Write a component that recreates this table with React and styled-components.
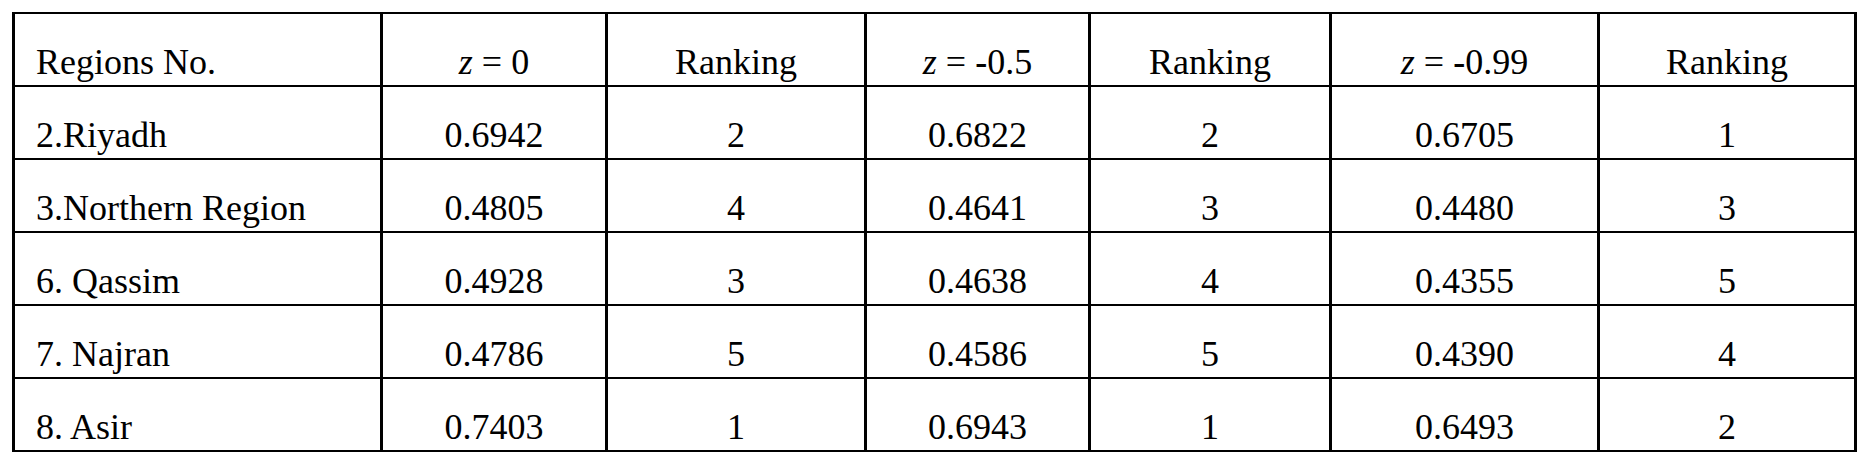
import React from 'react';
import styled, { createGlobalStyle } from 'styled-components';

// --- Styled Components (CSS) ---
const GlobalStyle = createGlobalStyle`
  html, body {
    margin: 0;
    padding: 0;
    background: #ffffff;
  }
`;

const Page = styled.div`
  padding: 12px 0 0 12px;
  background: #ffffff;
`;

const Table = styled.table`
  border-collapse: separate;
  border-spacing: 0;
  table-layout: fixed;
  width: 1845px;
  border-top: 2px solid #000;
  border-left: 3px solid #000;
  font-family: "Liberation Serif", "Times New Roman", serif;
  font-size: 36px;
  color: #000;
`;

const Row = styled.tr`
  height: 73px;
`;

const Cell = styled.td`
  box-sizing: border-box;
  border-right: 3px solid #000;
  border-bottom: 2px solid #000;
  padding: 0 0 5px ${props => (props.$left ? '21px' : '0')};
  text-align: ${props => (props.$left ? 'left' : 'center')};
  vertical-align: bottom;
  line-height: 1;
  white-space: nowrap;
`;

const Var = styled.i`
  font-style: italic;
`;

// the minus sign in the header is set heavier than the digits
const Minus = styled.b`
  font-weight: 700;
`;

// --- Data ---
const widths = [368, 225, 259, 224, 241, 268, 257];

const headers = [
  'Regions No.',
  <><Var>z</Var> = 0</>,
  'Ranking',
  <><Var>z</Var> = <Minus>-</Minus>0.5</>,
  'Ranking',
  <><Var>z</Var> = <Minus>-</Minus>0.99</>,
  'Ranking',
];

const rows = [
  ['2.Riyadh', '0.6942', '2', '0.6822', '2', '0.6705', '1'],
  ['3.Northern Region', '0.4805', '4', '0.4641', '3', '0.4480', '3'],
  ['6. Qassim', '0.4928', '3', '0.4638', '4', '0.4355', '5'],
  ['7. Najran', '0.4786', '5', '0.4586', '5', '0.4390', '4'],
  ['8. Asir', '0.7403', '1', '0.6943', '1', '0.6493', '2'],
];

// --- Main Component ---
const App = () => (
  <Page>
    <GlobalStyle />
    <Table>
      <colgroup>
        {widths.map((w, i) => (
          <col key={i} style={{ width: w }} />
        ))}
      </colgroup>
      <tbody>
        <Row>
          {headers.map((h, i) => (
            <Cell key={i} $left={i === 0}>{h}</Cell>
          ))}
        </Row>
        {rows.map((r, ri) => (
          <Row key={ri}>
            {r.map((v, i) => (
              <Cell key={i} $left={i === 0}>{v}</Cell>
            ))}
          </Row>
        ))}
      </tbody>
    </Table>
  </Page>
);

export default App;
